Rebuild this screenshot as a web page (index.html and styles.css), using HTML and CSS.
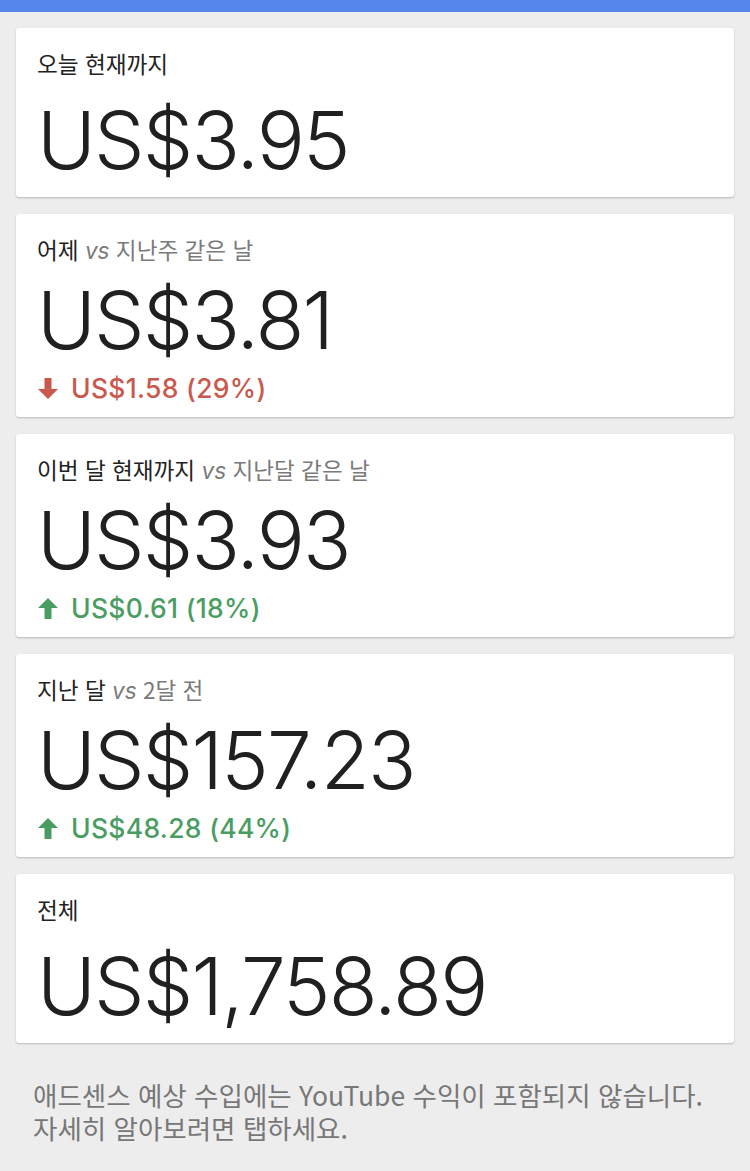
FILE: index.html
```html
<!DOCTYPE html>
<html lang="ko">
<head>
<meta charset="utf-8">
<title>애드센스 수입</title>
<link rel="stylesheet" href="styles.css">
</head>
<body>
<div class="topbar"></div>
<main class="list">
  <section class="card">
    <div class="label">오늘 현재까지</div>
    <div class="amount">US$3.95</div>
  </section>
  <section class="card has-change">
    <div class="label">어제 <span class="cmp"><i>vs</i> 지난주 같은 날</span></div>
    <div class="amount">US$3.81</div>
    <div class="change down">
      <svg class="arrow" viewBox="0 0 20 21" width="20" height="21"><path d="M6.5 0h7v11H20L10 21 0 11h6.5z" fill="currentColor"/></svg>
      <span>US$1.58 (29%)</span>
    </div>
  </section>
  <section class="card has-change">
    <div class="label">이번 달 현재까지 <span class="cmp"><i>vs</i> 지난달 같은 날</span></div>
    <div class="amount">US$3.93</div>
    <div class="change up">
      <svg class="arrow" viewBox="0 0 20 21" width="20" height="21"><path d="M6.5 21h7V10H20L10 0 0 10h6.5z" fill="currentColor"/></svg>
      <span>US$0.61 (18%)</span>
    </div>
  </section>
  <section class="card has-change">
    <div class="label">지난 달 <span class="cmp"><i>vs</i> 2달 전</span></div>
    <div class="amount">US$157.23</div>
    <div class="change up">
      <svg class="arrow" viewBox="0 0 20 21" width="20" height="21"><path d="M6.5 21h7V10H20L10 0 0 10h6.5z" fill="currentColor"/></svg>
      <span>US$48.28 (44%)</span>
    </div>
  </section>
  <section class="card">
    <div class="label">전체</div>
    <div class="amount total">US$1,758.89</div>
  </section>
  <p class="note">애드센스 예상 수입에는 YouTube 수익이 포함되지 않습니다. 자세히 알아보려면 탭하세요.</p>
</main>
</body>
</html>
```

FILE: styles.css
```css
html, body {
  margin: 0;
  padding: 0;
}
body {
  background: #ededed;
  font-family: Inter, "Noto Sans CJK KR", sans-serif;
  color: #212121;
  width: 750px;
  min-height: 1171px;
}
.topbar {
  height: 12px;
  background: #5686ec;
}
.list {
  padding: 16px 16px 0;
  display: flex;
  flex-direction: column;
  gap: 17px;
}
.card {
  background: #fff;
  border-radius: 3px;
  box-shadow: 0 1px 2px rgba(0, 0, 0, 0.22);
  padding: 21px 21px 9px;
}
.label {
  height: 30px;
  font-size: 22.6px;
  line-height: 30px;
  color: #222;
  font-family: "Noto Sans CJK KR", Inter, sans-serif;
  white-space: nowrap;
}
.cmp {
  color: #7a7a7a;
}
.cmp i {
  font-family: Inter, sans-serif;
  font-style: italic;
}
.amount {
  height: 96px;
  font-size: 80px;
  line-height: 96px;
  font-weight: 300;
  letter-spacing: -1.8px;
  margin-top: 13px;
  color: #202020;
  white-space: nowrap;
}
.has-change .amount {
  margin-top: 7px;
}
.change {
  height: 32px;
  display: flex;
  align-items: center;
  gap: 13px;
  font-size: 26.5px;
  line-height: 32px;
  font-weight: 500;
  letter-spacing: 0.3px;
  margin: 4px 0 4px;
}
.change .arrow {
  display: block;
  margin-left: 1px;
  margin-top: 1px;
}
.down { color: #c9584d; }
.up { color: #4a9d62; }
.note {
  margin: 18px 0 0;
  padding: 0 17px;
  font-family: "Noto Sans CJK KR", Inter, sans-serif;
  font-size: 26.5px;
  line-height: 33px;
  color: #777;
}
```
